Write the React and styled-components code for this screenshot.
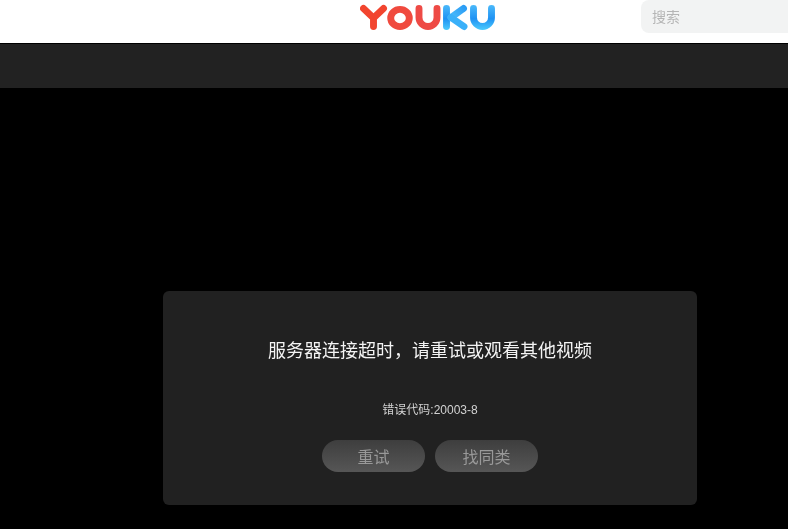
import React from "react";
import styled, { createGlobalStyle } from "styled-components";

const Global = createGlobalStyle`
  html, body { margin: 0; padding: 0; background: #000; }
  body { font-family: "Liberation Sans", "Noto Sans CJK SC", sans-serif; }
`;
const Page = styled.div`
  width: 788px;
  height: 529px;
  overflow: hidden;
  display: flex;
  flex-direction: column;
  background: #000;
`;
const Header = styled.header`
  height: 43px;
  background: #fff;
  border-bottom: 1px solid #000;
  display: flex;
  align-items: flex-start;
  padding-left: 360px;
  flex: none;
  will-change: transform;
`;
const Logo = styled.svg`
  display: block;
  width: 136px;
  height: 32px;
  margin-top: 1px;
  flex: none;
`;
const SearchBox = styled.div`
  margin-left: 145px;
  width: 147px;
  height: 33px;
  flex: none;
  box-sizing: border-box;
  background: #f2f3f3;
  border-radius: 8px 0 0 8px;
  padding-left: 11px;
  color: #b5b5b5;
  font-size: 14px;
  line-height: 34px;
`;
const SubBar = styled.div`
  height: 44px;
  flex: none;
  background: #222;
`;
const Stage = styled.main`
  flex: 1;
  padding: 203px 0 0 163px;
`;
const Card = styled.section`
  width: 534px;
  height: 214px;
  box-sizing: border-box;
  background: #212121;
  border-radius: 6px;
  display: flex;
  flex-direction: column;
  align-items: center;
  padding-top: 48px;
  will-change: transform;
`;
const Title = styled.h2`
  margin: 0;
  font-weight: 400;
  font-size: 18px;
  line-height: 24px;
  color: #f4f4f4;
`;
const Code = styled.p`
  margin: 39px 0 0;
  font-size: 12px;
  line-height: 16px;
  color: #d2d2d2;
`;
const Actions = styled.div`
  display: flex;
  gap: 10px;
  margin-top: 22px;
`;
const Action = styled.button`
  width: 103px;
  height: 32px;
  border: 0;
  padding: 0;
  border-radius: 16px;
  background: linear-gradient(180deg, #3e3e3e 0%, #565656 100%);
  color: #999;
  font-family: inherit;
  font-size: 16px;
  line-height: 35px;
`;

export default function App() {
  return (
    <Page>
      <Global />
      <Header>
        <Logo viewBox="0 0 136 32" fill="none" strokeWidth="6.9" strokeLinecap="round" strokeLinejoin="round" aria-label="YOUKU">
          <defs>
            <linearGradient id="blueV" gradientUnits="userSpaceOnUse" x1="0" y1="4" x2="0" y2="29">
              <stop offset="0" stopColor="#4ab9fa" />
              <stop offset="0.55" stopColor="#1f92f3" />
              <stop offset="1" stopColor="#4ccbfd" />
            </linearGradient>
            <linearGradient id="blueArm" gradientUnits="userSpaceOnUse" x1="104" y1="5" x2="92" y2="17">
              <stop offset="0" stopColor="#2a9cf5" />
              <stop offset="1" stopColor="#4bbcfb" />
            </linearGradient>
          </defs>
          <g stroke="#f2452f">
            <path d="M3.5 7.5 L13.5 17 L23.5 7.5 M13.5 17 V25.5" />
            <ellipse cx="40" cy="17" rx="9.3" ry="8.6" stroke="#f04a3e" />
            <path d="M59 7.5 V16.5 A9 9 0 0 0 77 16.5 V7.5" stroke="#ee4a45" />
          </g>
          <path d="M86.5 7.5 V25.5" stroke="url(#blueV)" />
          <path d="M103.5 7.5 L91 16.5" stroke="url(#blueArm)" />
          <path d="M91 16.5 L104 25.5" stroke="#3ab0f9" />
          <path d="M113.5 7.5 V16.5 A9 9 0 0 0 131.5 16.5 V7.5" stroke="url(#blueV)" />
        </Logo>
        <SearchBox>搜索</SearchBox>
      </Header>
      <SubBar />
      <Stage>
        <Card>
          <Title>服务器连接超时，请重试或观看其他视频</Title>
          <Code>错误代码:20003-8</Code>
          <Actions>
            <Action>重试</Action>
            <Action>找同类</Action>
          </Actions>
        </Card>
      </Stage>
    </Page>
  );
}
